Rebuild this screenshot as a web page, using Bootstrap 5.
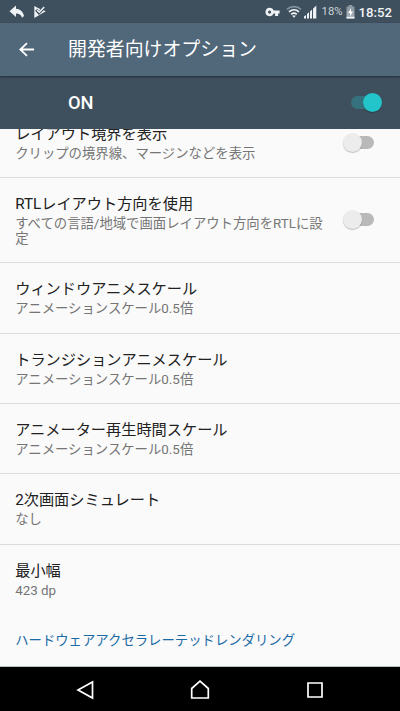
<!DOCTYPE html>
<html lang="ja">
<head>
<meta charset="utf-8">
<meta name="viewport" content="width=device-width, initial-scale=1">
<title>開発者向けオプション</title>
<link href="https://cdn.jsdelivr.net/npm/bootstrap@5.3.0/dist/css/bootstrap.min.css" rel="stylesheet">
<style>
body{font-family:Roboto,"Noto Sans CJK JP",sans-serif;background:#fafafa;height:711px;overflow:hidden}
svg{display:block;flex:none}
.statusbar{height:23px;background:#3e4f5d;color:#eff2f4;padding:0 8px 0 9px}
.status-pct{font-size:11.3px;line-height:23px;color:#ccd3d8}
.clock{font-size:13.2px;line-height:23px;padding-top:1px;font-weight:500;color:#f1f3f5}
.wifi{margin-left:6px}
.signal{margin-left:2px}
.pct-gap{margin-left:5px}
.cell-gap{margin-left:3px}
.appbar{height:53px;background:#51677a;padding-left:19px;box-shadow:0 1px 2px rgba(0,0,0,.4);z-index:1}
.appbar h1{font-size:18.9px;line-height:26px;margin-left:33px;padding-top:1px;font-weight:400}
.master{height:52.5px;background:#3e4f5d;padding:0 18px 0 68px;font-size:18.3px;font-weight:500}
.master-label{padding-top:1px}
.options{overflow:hidden;height:537px}
.option{height:70.35px;padding:15px 26px 0 15.2px;border-bottom:1px solid #dcdcdc}
.option.first{margin-top:-21px}
.option.tall{height:85.6px}
.option.last{border:0}
.opt-name{font-size:15.2px;line-height:22px;color:#212121}
.opt-note{font-size:13.36px;line-height:15.5px;margin-top:1px;color:#757575}
.opt-text{width:311px}
.toggle{width:31px;height:20px;position:relative;flex:none}
.toggle::before{content:"";position:absolute;left:8px;right:0;top:3.5px;height:13px;border-radius:7px;background:#b9b9b9}
.toggle::after{content:"";position:absolute;left:0;top:.5px;width:19px;height:19px;border-radius:50%;background:#ececec;box-shadow:0 1px 1px rgba(0,0,0,.24)}
.toggle.on::before{left:0;right:8px;background:#35727e}
.toggle.on::after{left:12px;background:#23c4ca}
.option .toggle{margin-top:10px}
.option.tall .toggle{margin-top:17px}
.section-title{font-size:13.36px;line-height:18px;color:#1a6ba5;padding:17px 15.2px}
.softkeys{height:45.5px;background:#000;border-top:1px solid #b8c4c2;padding-top:2px;gap:95px}
</style>
</head>
<body class="d-flex flex-column">
<header class="statusbar d-flex align-items-center flex-shrink-0">
  <svg width="16" height="14" viewBox="0 0 16 14"><path d="M7 .5v3.2c4 .3 7 2.500 8 7.300l-2 1.700C12.200 9.700 10 8.600 7 8.600v3.500L.5 6.200z" fill="currentColor"/></svg>
  <svg class="ms-2" width="14" height="14" viewBox="0 0 14 14"><path d="M1.300 1 6 3.600 8.500 4.600 12.800 6.200 1.300 13z" fill="currentColor"/><path d="M3.200 4.800 6 7.900 11.300 2.200" fill="none" stroke="#3e4f5d" stroke-width="3"/><path d="M4 5 6.300 7.200 11.200 2" fill="none" stroke="currentColor" stroke-width="1.500"/></svg>
  <svg class="ms-auto" width="15" height="12" viewBox="0 0 15 12"><path fill-rule="evenodd" d="M4.600 1.800a4.200 4.200 0 0 1 4 2.800h6v3h-1.500V10h-3V7.600H8.600a4.200 4.200 0 1 1-4-5.800zm0 2.700a1.600 1.600 0 1 0 0 3.200 1.600 1.600 0 0 0 0-3.200z" fill="currentColor"/></svg>
  <svg class="wifi" width="16" height="13" viewBox="0 0 16 13" fill="none"><path d="M1 4.300C5 .7 11 .7 15 4.300" stroke="#8493a0" stroke-width="1.700"/><path d="M3 6.800c3-2.700 7-2.700 10 0M5.200 9.300c1.700-1.500 3.900-1.500 5.600 0" stroke="currentColor" stroke-width="1.700"/><path d="M6.200 10.700q1.800-1 3.600 0L8 12.800z" fill="currentColor"/></svg>
  <svg class="signal" width="13" height="14" viewBox="0 0 13 14" fill="currentColor"><path d="M0 13.500v-2L2 10v3.500zM3 13.500V9l2-1.800v6.300zM6 13.500v-7l2-2v9zM9 13.500V3.700L12.300.5v13z"/></svg>
  <span class="status-pct pct-gap">18%</span>
  <svg class="cell-gap" width="9" height="14" viewBox="0 0 9 14"><path d="M2.700 0h3.600v1.500h2.200V6h-8V1.500h2.200z" fill="#8d9aa4"/><path d="M.5 6h8v7.500h-8z" fill="#9faab3"/><path d="M5 3 2.200 7.900h1.900v3.500l2.800-5H5z" fill="#fff"/><path d="M.5 11.800h8v1.700h-8z" fill="#eff2f4"/></svg>
  <span class="clock ms-1">18:52</span>
</header>
<nav class="appbar d-flex align-items-center flex-shrink-0 text-white position-relative">
  <svg width="16" height="16" viewBox="0 0 16 16" fill="none" stroke="currentColor" stroke-width="1.800"><path d="M8 1.200 1.300 7.500 8 13.800M1.300 7.500H15"/></svg>
  <h1 class="mb-0">開発者向けオプション</h1>
</nav>
<div class="master d-flex align-items-center justify-content-between flex-shrink-0 text-white">
  <span class="master-label">ON</span><span class="toggle on"></span>
</div>
<main class="options flex-shrink-0">
  <div class="option first d-flex justify-content-between"><div class="opt-text"><div class="opt-name">レイアウト境界を表示</div><div class="opt-note">クリップの境界線、マージンなどを表示</div></div><span class="toggle"></span></div>
  <div class="option tall d-flex justify-content-between"><div class="opt-text"><div class="opt-name">RTLレイアウト方向を使用</div><div class="opt-note">すべての言語/地域で画面レイアウト方向をRTLに設定</div></div><span class="toggle"></span></div>
  <div class="option"><div class="opt-name">ウィンドウアニメスケール</div><div class="opt-note">アニメーションスケール0.5倍</div></div>
  <div class="option"><div class="opt-name">トランジションアニメスケール</div><div class="opt-note">アニメーションスケール0.5倍</div></div>
  <div class="option"><div class="opt-name">アニメーター再生時間スケール</div><div class="opt-note">アニメーションスケール0.5倍</div></div>
  <div class="option"><div class="opt-name">2次画面シミュレート</div><div class="opt-note">なし</div></div>
  <div class="option last"><div class="opt-name">最小幅</div><div class="opt-note">423 dp</div></div>
  <div class="section-title">ハードウェアアクセラレーテッドレンダリング</div>
</main>
<footer class="softkeys d-flex justify-content-center align-items-center flex-shrink-0">
  <svg width="20" height="20" viewBox="0 0 20 20" fill="none" stroke="#fff" stroke-width="1.700"><path d="M17.500 2v16L3 10z"/></svg>
  <svg width="20" height="20" viewBox="0 0 20 20" fill="none" stroke="#fff" stroke-width="1.700"><path d="M1.700 18V8.500L10 1.200l8.300 7.300V18z"/></svg>
  <svg width="20" height="20" viewBox="0 0 20 20" fill="none" stroke="#fff" stroke-width="1.700"><path d="M3 3h14v14H3z"/></svg>
</footer>
</body>
</html>
